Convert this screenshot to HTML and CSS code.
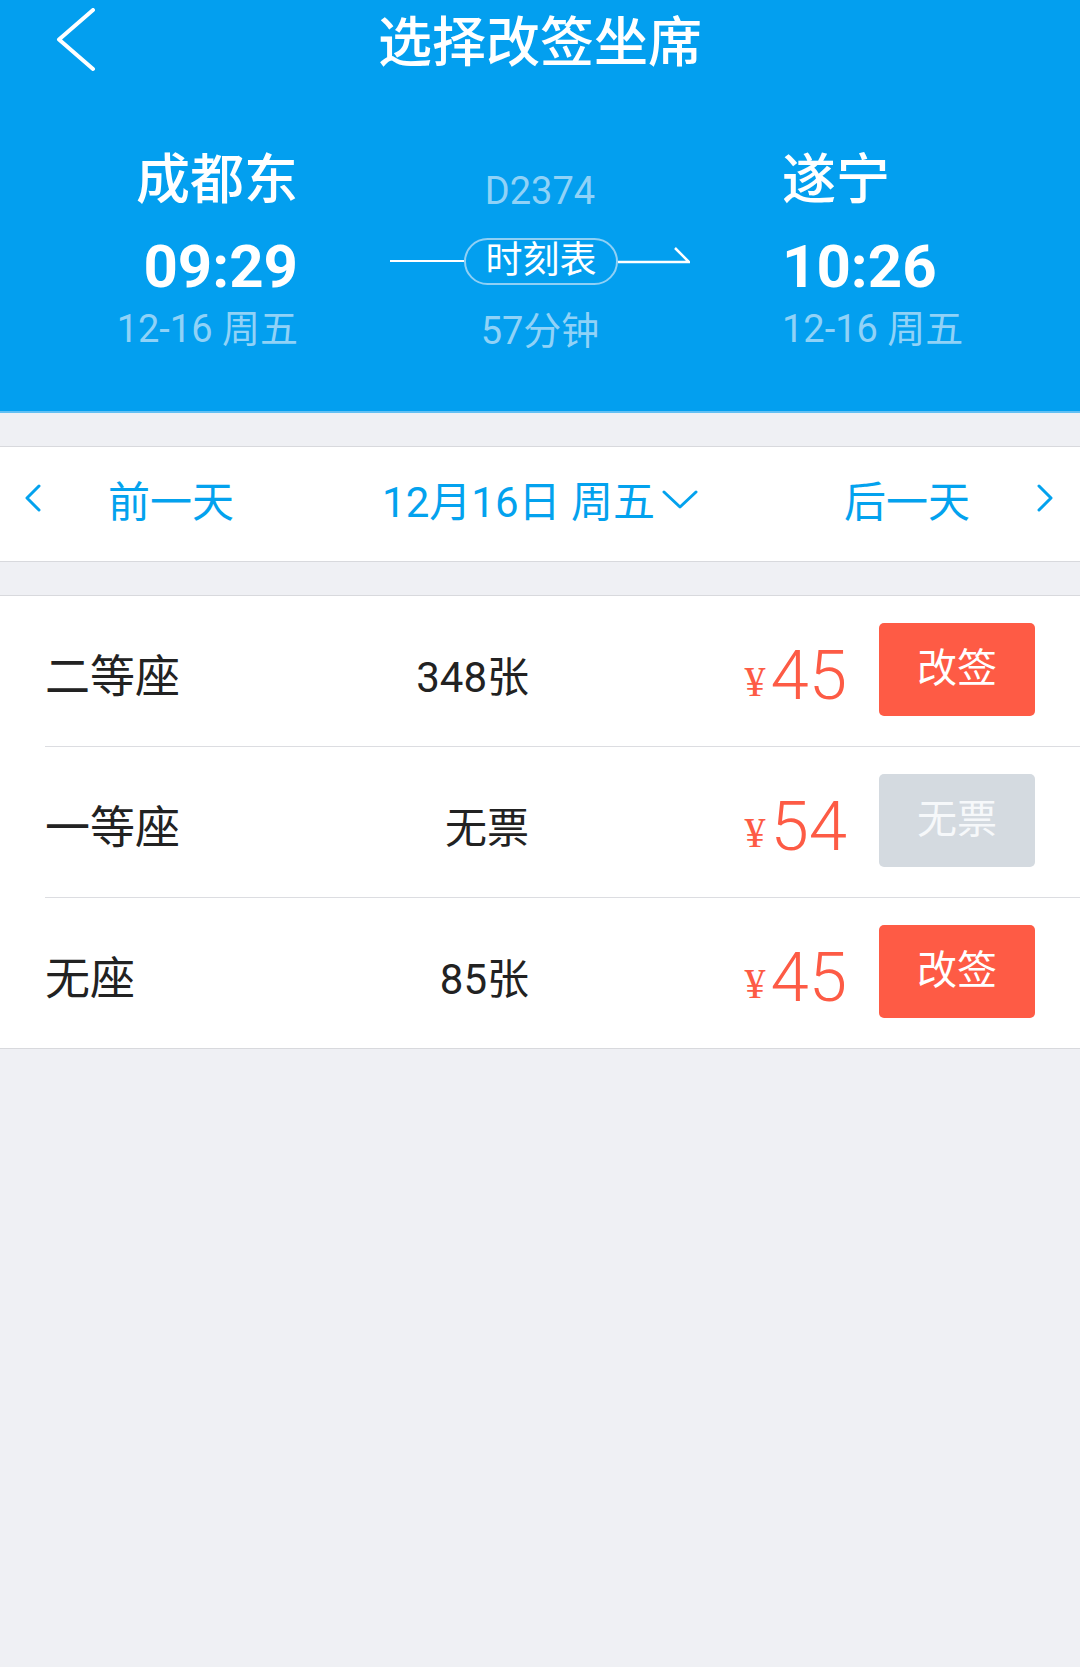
FILE: index.html
```html
<!DOCTYPE html>
<html lang="zh-CN">
<head>
<meta charset="UTF-8">
<meta name="viewport" content="width=device-width, initial-scale=1.0">
<title>选择改签坐席</title>
<link rel="stylesheet" href="styles.css">
</head>
<body>
<header class="hd">
    <div class="topbar">
        <a class="back" href="#">
            <svg width="40" height="64" viewBox="0 0 40 64"><polyline points="37,2 3,31.5 37,61" fill="none" stroke="#fff" stroke-width="4" stroke-linecap="round" stroke-linejoin="round"/></svg>
        </a>
        <h1 class="title">选择改签坐席</h1>
        <span></span>
    </div>
    <div class="trip">
        <div class="stn stn-from">
            <div class="stn-name">成都东</div>
            <div class="stn-time">09:29</div>
            <div class="stn-date">12-16 周五</div>
        </div>
        <div class="mid">
            <div class="train-no">D2374</div>
            <div class="route">
                <span class="route-line"></span>
                <span class="pill">时刻表</span>
                <svg class="route-arrow" width="72" height="24" viewBox="0 0 72 24"><path d="M0 18H71L57 4" fill="none" stroke="#fff" stroke-width="2.5"/></svg>
            </div>
            <div class="duration">57分钟</div>
        </div>
        <div class="stn stn-to">
            <div class="stn-name">遂宁</div>
            <div class="stn-time">10:26</div>
            <div class="stn-date">12-16 周五</div>
        </div>
    </div>
</header>

<nav class="datebar">
    <div class="day-prev">
        <svg width="18" height="28" viewBox="0 0 18 28"><polyline points="15,2 3,14 15,26" fill="none" stroke="#03a2ee" stroke-width="3" stroke-linecap="round" stroke-linejoin="round"/></svg>
        <span>前一天</span>
    </div>
    <div class="day-cur">
        <span>12月16日 周五</span>
        <svg class="caret" width="36" height="20" viewBox="0 0 36 20"><polyline points="2,2 18,17 34,2" fill="none" stroke="#03a2ee" stroke-width="3" stroke-linecap="round" stroke-linejoin="round"/></svg>
    </div>
    <div class="day-next">
        <span>后一天</span>
        <svg width="18" height="28" viewBox="0 0 18 28"><polyline points="3,2 15,14 3,26" fill="none" stroke="#03a2ee" stroke-width="3" stroke-linecap="round" stroke-linejoin="round"/></svg>
    </div>
</nav>

<section class="seats">
    <div class="seat">
        <div class="seat-name">二等座</div>
        <div class="seat-count">348张</div>
        <div class="price"><span class="yen">¥</span><span class="amount">45</span></div>
        <a class="btn" href="#">改签</a>
    </div>
    <div class="seat">
        <div class="seat-name">一等座</div>
        <div class="seat-count">无票</div>
        <div class="price"><span class="yen">¥</span><span class="amount">54</span></div>
        <a class="btn btn-off" href="#">无票</a>
    </div>
    <div class="seat">
        <div class="seat-name">无座</div>
        <div class="seat-count">85张</div>
        <div class="price"><span class="yen">¥</span><span class="amount">45</span></div>
        <a class="btn" href="#">改签</a>
    </div>
</section>
</body>
</html>
```

FILE: styles.css
```css
body {
    margin: 0;
    background-color: #eff0f4;
    font-family: Roboto, "Noto Sans CJK SC", sans-serif;
    color: #222;
}
a {
    text-decoration: none;
}

/* blue header */
.hd {
    background-color: #039fef;
    border-bottom: 2px solid #62c0f4;
    color: #fff;
}
.topbar {
    display: grid;
    grid-template-columns: 1fr auto 1fr;
    height: 88px;
}
.back {
    display: block;
    padding: 8px 0 0 56px;
}
.title {
    margin: 0;
    font-size: 54px;
    font-weight: 500;
    line-height: 88px;
}
.trip {
    display: grid;
    grid-template-columns: 1fr 300px 1fr;
    column-gap: 92px;
    padding: 61px 0 58px;
}
.stn-from {
    text-align: right;
}
.stn-to {
    text-align: left;
}
.stn-name {
    font-size: 54px;
    font-weight: 500;
    line-height: 64px;
}
.stn-time {
    margin-top: 22px;
    font-size: 60px;
    font-weight: bold;
    line-height: 64px;
}
.stn-date {
    margin-top: 8px;
    font-size: 38px;
    line-height: 44px;
    color: #90d2f7;
}
.mid {
    text-align: center;
}
.train-no {
    margin-top: 22px;
    font-size: 38px;
    line-height: 40px;
    color: #90d2f7;
}
.route {
    display: flex;
    align-items: center;
    height: 48px;
    margin-top: 26px;
}
.route-line {
    flex: 1;
    height: 2px;
    background-color: #fff;
}
.pill {
    width: 154px;
    height: 47px;
    box-sizing: border-box;
    border: 2px solid #8fd0f5;
    border-radius: 24px;
    font-size: 37px;
    line-height: 42px;
}
.route-arrow {
    margin-top: -11px;
}
.duration {
    margin-top: 24px;
    font-size: 38px;
    line-height: 44px;
    color: #90d2f7;
}

/* date switcher */
.datebar {
    display: grid;
    grid-template-columns: 1fr auto 1fr;
    align-items: center;
    height: 116px;
    box-sizing: border-box;
    padding-bottom: 12px;
    margin-top: 33px;
    background-color: #fff;
    border-top: 1px solid #d8d9dd;
    border-bottom: 1px solid #d8d9dd;
    font-size: 42px;
    color: #03a2ee;
}
.day-prev {
    display: flex;
    align-items: center;
    gap: 66px;
    padding-left: 24px;
}
.day-cur {
    display: flex;
    align-items: center;
}
.caret {
    margin: 4px 0 0 7px;
}
.day-next {
    display: flex;
    align-items: center;
    justify-content: flex-end;
    gap: 66px;
    padding-right: 26px;
}

/* seat list */
.seats {
    margin-top: 33px;
    background-color: #fff;
    border-top: 1px solid #d8d9dd;
    border-bottom: 1px solid #d8d9dd;
}
.seat {
    display: grid;
    grid-template-columns: 284px 200px 1fr 156px;
    align-items: center;
    height: 150px;
    margin-left: 45px;
    padding-right: 45px;
    border-bottom: 1px solid #dcdde1;
}
.seat:last-child {
    border-bottom: none;
}
.seat-name {
    font-size: 45px;
    padding-top: 4px;
}
.seat-count {
    font-size: 42px;
    padding-top: 4px;
    text-align: right;
}
.price {
    margin-right: 32px;
    padding-top: 8px;
    text-align: right;
    white-space: nowrap;
    color: #fd5b45;
}
.yen {
    margin-right: 5px;
    font-family: "Liberation Serif", serif;
    font-size: 42px;
    vertical-align: 3px;
}
.amount {
    font-size: 69px;
    font-weight: 300;
    line-height: 1;
}
.btn {
    display: flex;
    align-items: center;
    justify-content: center;
    height: 93px;
    margin-top: -3px;
    padding-bottom: 10px;
    box-sizing: border-box;
    border-radius: 5px;
    background-color: #fe5b45;
    color: #fff;
    font-size: 40px;
}
.btn-off {
    background-color: #d4dae0;
    color: #f6f8fa;
}
```
